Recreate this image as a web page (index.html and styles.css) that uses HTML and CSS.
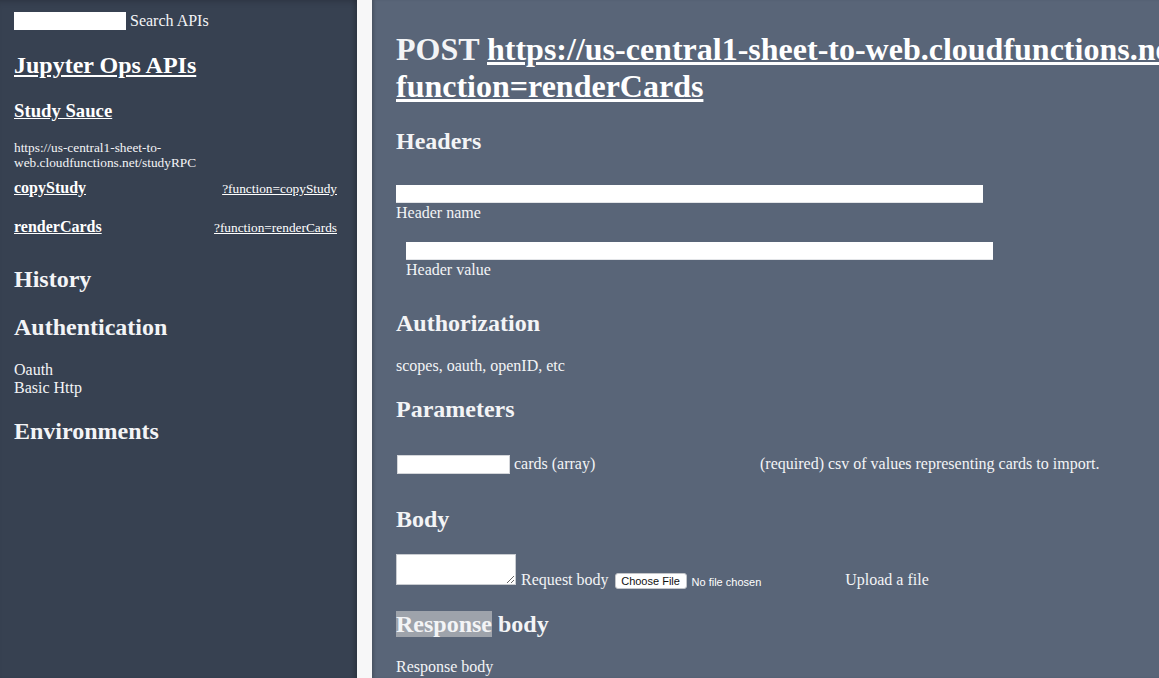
FILE: index.html
```html
<!DOCTYPE html>
<html lang="en">
<head>
<meta charset="utf-8">
<title>Jupyter Ops APIs</title>
<link rel="stylesheet" href="styles.css">
</head>
<body>
<div class="app">
  <aside class="sidebar">
    <div class="search">
      <input class="search-input" type="text" aria-label="Search APIs">
      <span class="search-label">Search APIs</span>
    </div>
    <h2 class="sb-title"><a href="#">Jupyter Ops APIs</a></h2>
    <h3 class="sb-api"><a href="#">Study Sauce</a></h3>
    <p class="sb-url">https://us-central1-sheet-to-web.cloudfunctions.net/studyRPC</p>
    <div class="fn-row fn-first">
      <a class="fn-name" href="#">copyStudy</a>
      <a class="fn-query" href="#">?function=copyStudy</a>
    </div>
    <div class="fn-row">
      <a class="fn-name" href="#">renderCards</a>
      <a class="fn-query" href="#">?function=renderCards</a>
    </div>
    <h2 class="sb-section sb-history">History</h2>
    <h2 class="sb-section sb-auth">Authentication</h2>
    <ul class="auth-list">
      <li>Oauth</li>
      <li>Basic Http</li>
    </ul>
    <h2 class="sb-section sb-env">Environments</h2>
  </aside>
  <div class="gap"></div>
  <main class="main">
    <h1 class="endpoint">POST <a href="#">https://us-central1-sheet-to-web.cloudfunctions.net/studyRPC?<br>function=renderCards</a></h1>

    <h2 class="sec sec-headers">Headers</h2>
    <div class="field field-name">
      <input class="wide-input" type="text" aria-label="Header name">
      <div class="field-label">Header name</div>
    </div>
    <div class="field field-value">
      <input class="wide-input" type="text" aria-label="Header value">
      <div class="field-label">Header value</div>
    </div>

    <h2 class="sec sec-auth">Authorization</h2>
    <p class="text auth-text">scopes, oauth, openID, etc</p>

    <h2 class="sec sec-params">Parameters</h2>
    <div class="param-row">
      <input class="param-input" type="text" aria-label="cards">
      <span class="param-name">cards (array)</span>
      <span class="param-desc">(required) csv of values representing cards to import.</span>
    </div>

    <h2 class="sec sec-body">Body</h2>
    <div class="body-row">
      <textarea class="body-input" aria-label="Request body"></textarea>
      <span class="body-label">Request body</span>
      <span class="file-btn">Choose File</span>
      <span class="file-status">No file chosen</span>
      <span class="upload-label">Upload a file</span>
    </div>

    <h2 class="sec sec-response"><span class="hl">Response</span> body</h2>
    <p class="text response-text">Response body</p>
  </main>
</div>
</body>
</html>
```

FILE: styles.css
```css
html, body {
  margin: 0;
  padding: 0;
  height: 100%;
  overflow: hidden;
  background: #f7f7f8;
}

body {
  font-family: "Liberation Serif", "Times New Roman", serif;
  color: #f3f4f6;
}

a {
  color: #ffffff;
  text-decoration: underline;
}

h1, h2, h3, p, ul {
  margin: 0;
  padding: 0;
}

.app {
  display: flex;
  height: 100vh;
}

/* ---------- sidebar ---------- */
.sidebar {
  box-sizing: border-box;
  flex: 0 0 357px;
  width: 357px;
  height: 100%;
  padding: 12px 20px 0 14px;
  background: #374151;
  box-shadow: inset -5px 0 4px -2px rgba(0, 0, 0, 0.18), inset 0 6px 6px -4px rgba(0, 0, 0, 0.15);
}

.gap {
  flex: 0 0 15px;
  background: #f7f7f8;
}

.search {
  display: flex;
  align-items: center;
  height: 18px;
  gap: 4px;
}

.search-input {
  box-sizing: border-box;
  width: 112px;
  height: 18px;
  margin: 0;
  padding: 0 2px;
  border: none;
  background: #ffffff;
}

.search-label {
  font-size: 16px;
  line-height: 18px;
}

.sb-title {
  margin-top: 22px;
  font-size: 24px;
  line-height: 1.15;
  font-weight: bold;
}

.sb-api {
  margin-top: 20px;
  font-size: 18.72px;
  line-height: 1.15;
  font-weight: bold;
}

.sb-url {
  margin-top: 19px;
  font-size: 13.33px;
  line-height: 15px;
  color: #f3f4f6;
}

.fn-row {
  display: flex;
  justify-content: space-between;
  align-items: baseline;
  margin-top: 20px;
}

.fn-row.fn-first {
  margin-top: 9px;
}

.fn-name {
  font-size: 16px;
  line-height: 1.15;
  font-weight: bold;
}

.fn-query {
  font-size: 13.33px;
  line-height: 1.15;
}

.sb-section {
  font-size: 24px;
  line-height: 1.15;
  font-weight: bold;
  margin-top: 21px;
}

.sb-history {
  margin-top: 30px;
}

.sb-env {
  margin-top: 21.5px;
}

.auth-list {
  list-style: none;
  margin-top: 18.5px;
  font-size: 16px;
  line-height: 18px;
}

/* ---------- main ---------- */
.main {
  flex: 1 1 auto;
  min-width: 0;
  height: 100%;
  overflow: hidden;
  box-sizing: border-box;
  padding: 31px 0 0 24px;
  background: #596578;
  box-shadow: inset 3px 0 3px -1px rgba(0, 0, 0, 0.18);
}

.endpoint {
  font-size: 32px;
  line-height: 37px;
  font-weight: bold;
  white-space: nowrap;
}

.sec {
  font-size: 24px;
  line-height: 1.15;
  font-weight: bold;
}

.sec-headers { margin-top: 23px; }
.sec-auth { margin-top: 31.5px; }
.sec-params { margin-top: 21px; }
.sec-body { margin-top: 32px; }
.sec-response { margin-top: 22px; }

.hl {
  background: #9ea3ab;
}

.field-name { margin-top: 29px; }
.field-value { margin-top: 20px; margin-left: 10px; }

.wide-input {
  display: block;
  box-sizing: border-box;
  width: 587px;
  height: 18px;
  margin: 0;
  padding: 0 2px;
  border: none;
  border-bottom: 1px solid #e3e5e8;
  background: #ffffff;
}

.field-label {
  font-size: 16px;
  line-height: 18px;
  padding-top: 1px;
}

.text {
  font-size: 16px;
  line-height: 18px;
}

.auth-text { margin-top: 19px; }
.response-text { margin-top: 20px; }

.param-row {
  display: grid;
  grid-template-columns: 118px 246px auto;
  align-items: center;
  margin-top: 31.7px;
  font-size: 16px;
  line-height: 18px;
}

.param-input {
  box-sizing: border-box;
  width: 113px;
  height: 19px;
  margin: 0 0 0 1px;
  padding: 0 2px;
  border: 1px solid #d4d6da;
  background: #ffffff;
}

.body-row {
  display: flex;
  align-items: flex-end;
  margin-top: 20px;
  font-size: 16px;
  line-height: 18px;
}

.body-input {
  box-sizing: border-box;
  width: 120px;
  height: 31px;
  margin: 0 0 4px 0;
  padding: 2px;
  border: 1px solid #c9ccd1;
  background: #ffffff;
  resize: both;
  font-family: "Liberation Mono", monospace;
}

.body-label {
  margin-left: 5px;
}

.file-btn {
  box-sizing: border-box;
  display: inline-flex;
  align-items: center;
  justify-content: center;
  width: 72px;
  height: 16px;
  margin-left: 6px;
  border: 1px solid #c3c5c9;
  border-radius: 3px;
  background: #ffffff;
  color: #111111;
  font-family: "Liberation Sans", Arial, sans-serif;
  font-size: 11px;
  line-height: 14px;
}

.file-status {
  margin-left: 5px;
  font-family: "Liberation Sans", Arial, sans-serif;
  font-size: 11px;
  line-height: 13px;
  color: #ffffff;
}

.upload-label {
  margin-left: 84px;
}
```
